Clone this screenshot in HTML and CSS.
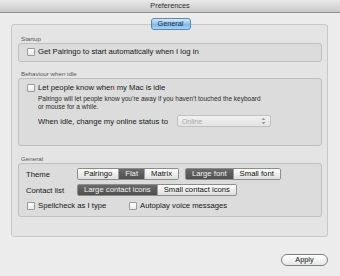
FILE: index.html
```html
<!DOCTYPE html>
<html lang="en">
  <head>
    <meta charset="UTF-8" />
    <title>Preferences</title>
    <link rel="stylesheet" href="styles.css">
  </head>
  <body>
    <div class="window">
      <div class="titlebar">Preferences</div>

      <div class="content">
        <div class="tab-row">
          <span class="tab selected">General</span>
        </div>

        <div class="tab-box">
          <div class="group-label">Startup</div>
          <div class="group startup">
            <label class="check">
              <span class="checkbox"></span>
              Get Palringo to start automatically when I log in
            </label>
          </div>

          <div class="group-label">Behaviour when idle</div>
          <div class="group idle">
            <label class="check">
              <span class="checkbox"></span>
              Let people know when my Mac is idle
            </label>
            <div class="description">
              Palringo will let people know you’re away if you haven’t touched the keyboard<br>
              or mouse for a while.
            </div>
            <div class="status-row">
              <span>When idle, change my online status to</span>
              <span class="popup disabled">
                Online
                <span class="popup-arrows">
                  <svg width="5" height="8" viewBox="0 0 5 8">
                    <path d="M0.5 3 L2.5 0.8 L4.5 3 Z M0.5 5 L2.5 7.2 L4.5 5 Z" fill="#9a9a9a" />
                  </svg>
                </span>
              </span>
            </div>
          </div>

          <div class="group-label">General</div>
          <div class="group general">
            <div class="option-row">
              <span class="option-label">Theme</span>
              <div class="segmented">
                <span class="segment">Palringo</span>
                <span class="segment on">Flat</span>
                <span class="segment">Matrix</span>
              </div>
              <div class="segmented">
                <span class="segment on">Large font</span>
                <span class="segment">Small font</span>
              </div>
            </div>
            <div class="option-row">
              <span class="option-label">Contact list</span>
              <div class="segmented">
                <span class="segment on">Large contact icons</span>
                <span class="segment">Small contact icons</span>
              </div>
            </div>
            <div class="check-row">
              <label class="check spell">
                <span class="checkbox"></span>
                Spellcheck as I type
              </label>
              <label class="check">
                <span class="checkbox"></span>
                Autoplay voice messages
              </label>
            </div>
          </div>
        </div>

        <div class="button-row">
          <button class="apply">Apply</button>
        </div>
      </div>
    </div>
  </body>
</html>
```

FILE: styles.css
```css
:root {
  --window-bg: #ececec;
  --box-bg: #e4e4e4;
  --group-bg: #dcdcdc;
  --border-box: #c8c8c8;
  --border-group: #bfbfbf;
  --text-primary: #161616;
  --text-secondary: #555;
}

* {
  box-sizing: border-box;
  margin: 0;
  padding: 0;
}

body {
  font-family: "Liberation Sans", Arial, sans-serif;
  font-size: 7.7px;
  background: var(--window-bg);
  color: var(--text-primary);
  width: 340px;
  height: 276px;
  overflow: hidden;
}

.titlebar {
  height: 13px;
  line-height: 12px;
  text-align: center;
  font-size: 7.3px;
  color: #2e2e2e;
  background: linear-gradient(#e9e9e9, #c9c9c9);
  border-bottom: 1px solid #8f8f8f;
}

.content {
  padding: 5px 12px 0 11px;
}

.tab-row {
  display: flex;
  justify-content: center;
  margin-bottom: -6px;
  position: relative;
  padding-left: 2px;
}

.tab {
  display: inline-block;
  width: 40px;
  height: 12px;
  line-height: 10px;
  text-align: center;
  font-size: 7.3px;
  border-radius: 3px;
}

.tab.selected {
  background: linear-gradient(#d3e8fb, #8fc3f1 50%, #79b5ec 51%, #aad3f7);
  border: 1px solid #5b86b4;
  color: #1b2b3d;
}

.tab-box {
  background: var(--box-bg);
  border: 1px solid var(--border-box);
  border-radius: 3px;
  height: 213px;
  padding: 10px 5px 0 6px;
}

.group-label {
  font-size: 6.2px;
  line-height: 8px;
  height: 8px;
  color: var(--text-secondary);
  padding-left: 3px;
}

.group {
  background: var(--group-bg);
  border: 1px solid var(--border-group);
  border-radius: 3px;
  margin-bottom: 8px;
}

.check {
  display: flex;
  align-items: center;
  gap: 3px;
  line-height: 10px;
  white-space: nowrap;
}

.checkbox {
  display: inline-block;
  width: 8px;
  height: 8px;
  border: 1px solid #9a9a9a;
  border-radius: 1px;
  background: linear-gradient(#ffffff, #e9e9e9);
}

.startup {
  height: 19px;
  padding: 3px 8px;
}

.idle {
  height: 68px;
  padding: 4px 8px;
  margin-bottom: 9px;
}

.description {
  font-size: 6.5px;
  line-height: 8px;
  color: #2a2a2a;
  padding-left: 11px;
  margin-top: 2px;
}

.status-row {
  display: flex;
  align-items: center;
  gap: 9px;
  padding-left: 11px;
  margin-top: 4px;
}

.popup {
  display: flex;
  align-items: center;
  justify-content: space-between;
  width: 94px;
  height: 12px;
  padding: 0 4px;
  font-size: 7px;
  border: 1px solid #c0c0c0;
  border-radius: 2px;
  background: linear-gradient(#f1f1f1, #e3e3e3);
}

.popup.disabled {
  color: #a8a8a8;
}

.popup-arrows {
  display: flex;
}

.general {
  height: 54px;
  padding: 4px 8px 0 7px;
}

.option-row {
  display: flex;
  align-items: center;
  height: 12px;
  margin-bottom: 4px;
}

.option-label {
  width: 51px;
  white-space: nowrap;
}

.segmented {
  display: flex;
  height: 12px;
  margin-right: 6px;
  border: 1px solid #8c8c8c;
  border-radius: 2px;
  overflow: hidden;
}

.segment {
  padding: 0 6px;
  line-height: 10px;
  background: linear-gradient(#ffffff, #dedede);
  border-left: 1px solid #9c9c9c;
  color: #111;
  white-space: nowrap;
}

.segment:first-child {
  border-left: none;
}

.segment.on {
  background: linear-gradient(#6a6a6a, #4e4e4e);
  color: #f2f2f2;
}

.check-row {
  display: flex;
  align-items: center;
  height: 12px;
  margin-top: 2px;
  padding-left: 1px;
}

.spell {
  width: 102px;
}

.button-row {
  display: flex;
  justify-content: flex-end;
  margin-top: 17px;
}

.apply {
  width: 47px;
  height: 12px;
  font-family: "Liberation Sans", Arial, sans-serif;
  font-size: 7.3px;
  line-height: 10px;
  border: 1px solid #7f7f7f;
  border-radius: 6px;
  background: linear-gradient(#ffffff, #e6e6e6);
  color: #111;
}
```
